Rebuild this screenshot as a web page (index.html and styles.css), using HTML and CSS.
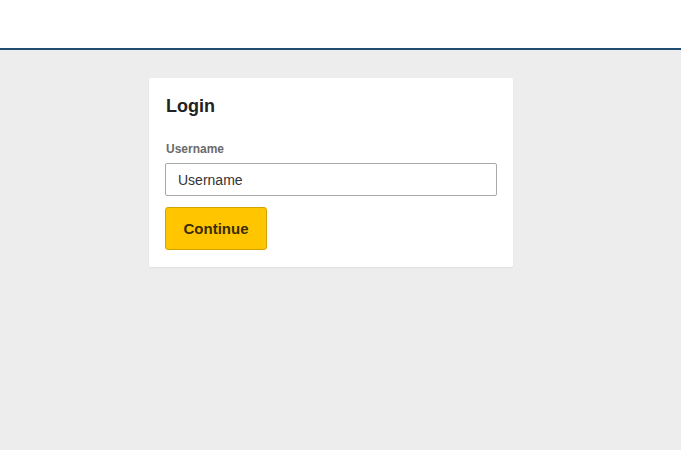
FILE: index.html
```html
<!DOCTYPE html>
<html>
<head>
<meta charset="utf-8">
<link rel="stylesheet" href="styles.css">
</head>
<body>
<header class="topbar"></header>
<main class="page">
  <section class="card">
    <h1 class="title">Login</h1>
    <label class="label" for="u">Username</label>
    <input class="input" id="u" type="text" placeholder="Username">
    <button class="btn">Continue</button>
  </section>
</main>
</body>
</html>
```
FILE: styles.css
```css
html, body { margin: 0; padding: 0; }
body {
  font-family: "Liberation Sans", Arial, sans-serif;
  background: #ededee;
  height: 450px;
  overflow: hidden;
}
.topbar {
  height: 48px;
  background: #fff;
  border-bottom: 2px solid #214c72;
}
.page {
  padding: 28px 0 0 149px;
}
.card {
  width: 332px;
  background: #fff;
  padding: 16px 16px 17px 16px;
  box-shadow: 0 1px 2px rgba(0,0,0,0.06);
  border-radius: 2px;
  display: flex;
  flex-direction: column;
  align-items: flex-start;
}
.title {
  margin: 0 0 24px 1px;
  font-size: 18px;
  font-weight: bold;
  color: #222;
  line-height: 24px;
}
.label {
  font-size: 12px;
  font-weight: bold;
  color: #6a6a6a;
  margin: 0 0 7px 1px;
  line-height: 14px;
}
.input {
  box-sizing: border-box;
  width: 332px;
  height: 33px;
  border: 1px solid #a9a9a9;
  border-radius: 2px;
  padding: 0 12px;
  font-family: inherit;
  font-size: 14px;
  color: #222;
  margin: 0 0 11px 0;
}
.input::placeholder { color: #333; }
.btn {
  box-sizing: border-box;
  width: 102px;
  height: 43px;
  background: #ffc600;
  border: 1px solid #d3a300;
  border-radius: 3px;
  font-family: inherit;
  font-size: 15px;
  font-weight: bold;
  color: #3a2c00;
  padding: 0;
}
```
